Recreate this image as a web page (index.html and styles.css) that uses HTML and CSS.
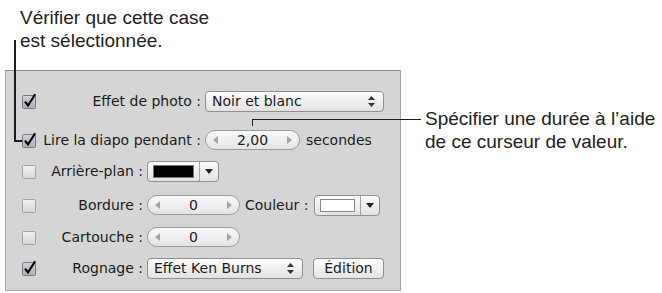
FILE: index.html
```html
<!DOCTYPE html>
<html lang="fr">
<head>
<meta charset="utf-8">
<title>Diaporama</title>
<link rel="stylesheet" href="styles.css">
</head>
<body>
<div class="figure">
  <p class="note note-top">Vérifier que cette case<br>est sélectionnée.</p>
  <div class="stage">
    <div class="panel">
      <div class="row r1">
        <svg class="cb" width="16" height="16" viewBox="0 0 16 16"><defs><linearGradient id="gc" x1="0" y1="0" x2="0" y2="1"><stop offset="0" stop-color="#d2d3db"/><stop offset="1" stop-color="#a9acba"/></linearGradient></defs><rect x="1.5" y="2.5" width="13" height="13" rx="1" fill="url(#gc)" stroke="#7a7a82"/><path d="M4 8.6 L7 12.4 L14.2 1.2" fill="none" stroke="#000" stroke-width="2.1" stroke-linejoin="miter"/></svg>
        <span class="label wide">Effet de photo :</span>
        <div class="popup popup-effect"><span>Noir et blanc</span><svg width="7" height="11" viewBox="0 0 7 11"><polygon points="0,4 3.5,0 7,4" fill="#333"/><polygon points="0,7 3.5,11 7,7" fill="#333"/></svg></div>
      </div>
      <div class="row r2">
        <svg class="cb" width="16" height="16" viewBox="0 0 16 16"><rect x="1.5" y="2.5" width="13" height="13" rx="1" fill="url(#gc)" stroke="#7a7a82"/><path d="M4 8.6 L7 12.4 L14.2 1.2" fill="none" stroke="#000" stroke-width="2.1"/></svg>
        <span class="label wide">Lire la diapo pendant :</span>
        <div class="stepper stepper-wide"><svg width="5" height="8" viewBox="0 0 5 8"><polygon points="5,0 0,4 5,8" fill="#a3a3a3"/></svg><span class="value">2,00</span><svg width="5" height="8" viewBox="0 0 5 8"><polygon points="0,0 5,4 0,8" fill="#a3a3a3"/></svg></div>
        <span class="unit">secondes</span>
      </div>
      <div class="row r3">
        <svg class="cb" width="16" height="16" viewBox="0 0 16 16"><defs><linearGradient id="gu" x1="0" y1="0" x2="0" y2="1"><stop offset="0" stop-color="#f2f2f2"/><stop offset="1" stop-color="#d6d6d6"/></linearGradient></defs><rect x="1.5" y="2.5" width="13" height="13" rx="1" fill="url(#gu)" stroke="#a3a3a3"/></svg>
        <span class="label narrow">Arrière-plan :</span>
        <div class="well well-bg"><span class="swatch-area"><span class="swatch swatch-black"></span></span><span class="well-arrow"><svg width="8" height="5" viewBox="0 0 8 5"><polygon points="0,0 8,0 4,5" fill="#222"/></svg></span></div>
      </div>
      <div class="row r4">
        <svg class="cb" width="16" height="16" viewBox="0 0 16 16"><rect x="1.5" y="2.5" width="13" height="13" rx="1" fill="url(#gu)" stroke="#a3a3a3"/></svg>
        <span class="label narrow">Bordure :</span>
        <div class="stepper"><svg width="5" height="8" viewBox="0 0 5 8"><polygon points="5,0 0,4 5,8" fill="#a3a3a3"/></svg><span class="value">0</span><svg width="5" height="8" viewBox="0 0 5 8"><polygon points="0,0 5,4 0,8" fill="#a3a3a3"/></svg></div>
        <span class="inline-label">Couleur :</span>
        <div class="well well-border"><span class="swatch-area"><span class="swatch swatch-white"></span></span><span class="well-arrow"><svg width="8" height="5" viewBox="0 0 8 5"><polygon points="0,0 8,0 4,5" fill="#222"/></svg></span></div>
      </div>
      <div class="row r5">
        <svg class="cb" width="16" height="16" viewBox="0 0 16 16"><rect x="1.5" y="2.5" width="13" height="13" rx="1" fill="url(#gu)" stroke="#a3a3a3"/></svg>
        <span class="label narrow">Cartouche :</span>
        <div class="stepper"><svg width="5" height="8" viewBox="0 0 5 8"><polygon points="5,0 0,4 5,8" fill="#a3a3a3"/></svg><span class="value">0</span><svg width="5" height="8" viewBox="0 0 5 8"><polygon points="0,0 5,4 0,8" fill="#a3a3a3"/></svg></div>
      </div>
      <div class="row r6">
        <svg class="cb" width="16" height="16" viewBox="0 0 16 16"><rect x="1.5" y="2.5" width="13" height="13" rx="1" fill="url(#gc)" stroke="#7a7a82"/><path d="M4 8.6 L7 12.4 L14.2 1.2" fill="none" stroke="#000" stroke-width="2.1"/></svg>
        <span class="label narrow">Rognage :</span>
        <div class="popup popup-crop"><span>Effet Ken Burns</span><svg width="7" height="11" viewBox="0 0 7 11"><polygon points="0,4 3.5,0 7,4" fill="#333"/><polygon points="0,7 3.5,11 7,7" fill="#333"/></svg></div>
        <div class="button">Édition</div>
      </div>
    </div>
    <p class="note note-right">Spécifier une durée à l’aide<br>de ce curseur de valeur.</p>
  </div>
  <div class="leader leader-left"></div>
  <div class="leader leader-right"></div>
</div>
</body>
</html>
```
FILE: styles.css
```css
html, body {
  margin: 0;
  padding: 0;
  background: #fff;
}
body {
  width: 662px;
  height: 293px;
  overflow: hidden;
  font-family: "Liberation Sans", Arial, sans-serif;
  color: #1d1d1d;
}
.figure {
  position: relative;
  width: 662px;
  height: 293px;
}
.note {
  margin: 0;
  font-size: 19px;
  line-height: 23px;
  color: #222;
  white-space: nowrap;
}
.note-top {
  padding: 6px 0 0 20px;
}
.stage {
  display: flex;
  align-items: flex-start;
  margin-top: 18px;
  padding-left: 5px;
}
.note-right {
  margin-left: 24px;
  margin-top: 37px;
}
.panel {
  box-sizing: border-box;
  width: 396px;
  height: 221px;
  flex: none;
  background: #d5d5d5;
  border: 1px solid #a6a6a6;
  border-top-color: #8c8c8c;
  padding: 19px 0 0 15px;
  font-family: "DejaVu Sans", "Liberation Sans", sans-serif;
  font-size: 14px;
  color: #1a1a1a;
}
.row {
  display: flex;
  align-items: center;
  height: 22px;
}
.r2 { margin-top: 17px; }
.r3 { margin-top: 9px; }
.r4 { margin-top: 12px; }
.r5 { margin-top: 10px; }
.r6 { margin-top: 9px; }
.cb {
  flex: none;
  display: block;
}
.label {
  margin-left: 2px;
  text-align: right;
  white-space: nowrap;
  flex: none;
}
.wide { width: 162px; }
.narrow { width: 104px; }
.popup {
  box-sizing: border-box;
  display: flex;
  align-items: center;
  justify-content: space-between;
  height: 21px;
  margin-left: 4px;
  padding: 0 8px 0 6px;
  border: 1px solid #8f8f8f;
  border-radius: 4px;
  background: linear-gradient(#fefefe, #efefef 50%, #e2e2e2);
  flex: none;
}
.popup-effect { width: 179px; }
.popup-crop { width: 156px; }
.stepper {
  box-sizing: border-box;
  display: flex;
  align-items: center;
  justify-content: space-between;
  width: 93px;
  height: 20px;
  margin-left: 4px;
  padding: 0 7px;
  border: 1px solid #9d9d9d;
  border-radius: 10px;
  background: linear-gradient(#f9f9f9, #e4e4e4);
  flex: none;
}
.stepper-wide { width: 95px; }
.value {
  flex: 1;
  text-align: center;
}
.unit {
  margin-left: 6px;
}
.inline-label {
  margin-left: 5px;
  white-space: nowrap;
}
.well {
  box-sizing: border-box;
  display: flex;
  height: 21px;
  margin-left: 4px;
  border: 1px solid #8f8f8f;
  border-radius: 4px;
  background: linear-gradient(#fbfbfb, #e3e3e3);
  flex: none;
}
.well-bg { width: 72px; }
.well-border { width: 66px; margin-left: 5px; }
.swatch-area {
  flex: 1;
  display: flex;
  align-items: center;
  justify-content: center;
  border-right: 1px solid #a3a3a3;
}
.swatch {
  box-sizing: border-box;
  height: 13px;
  border: 1px solid #777;
}
.swatch-black { width: 41px; background: #000; }
.swatch-white { width: 35px; background: #fff; border-color: #8a8a8a; }
.well-arrow {
  width: 18px;
  display: flex;
  align-items: center;
  justify-content: center;
}
.button {
  box-sizing: border-box;
  width: 71px;
  height: 21px;
  margin-left: 10px;
  display: flex;
  align-items: center;
  justify-content: center;
  border: 1px solid #8f8f8f;
  border-radius: 4px;
  background: linear-gradient(#fefefe, #e4e4e4);
  flex: none;
}
.leader {
  position: absolute;
  border-color: #1c1c1c;
  border-style: solid;
  border-width: 0;
}
.leader-left {
  left: 14px;
  top: 40px;
  width: 6px;
  height: 100px;
  border-left-width: 2px;
  border-bottom-width: 2px;
}
.leader-right {
  left: 252px;
  top: 119px;
  width: 168px;
  height: 6px;
  border-top-width: 1.5px;
  border-left-width: 1.5px;
}
```
